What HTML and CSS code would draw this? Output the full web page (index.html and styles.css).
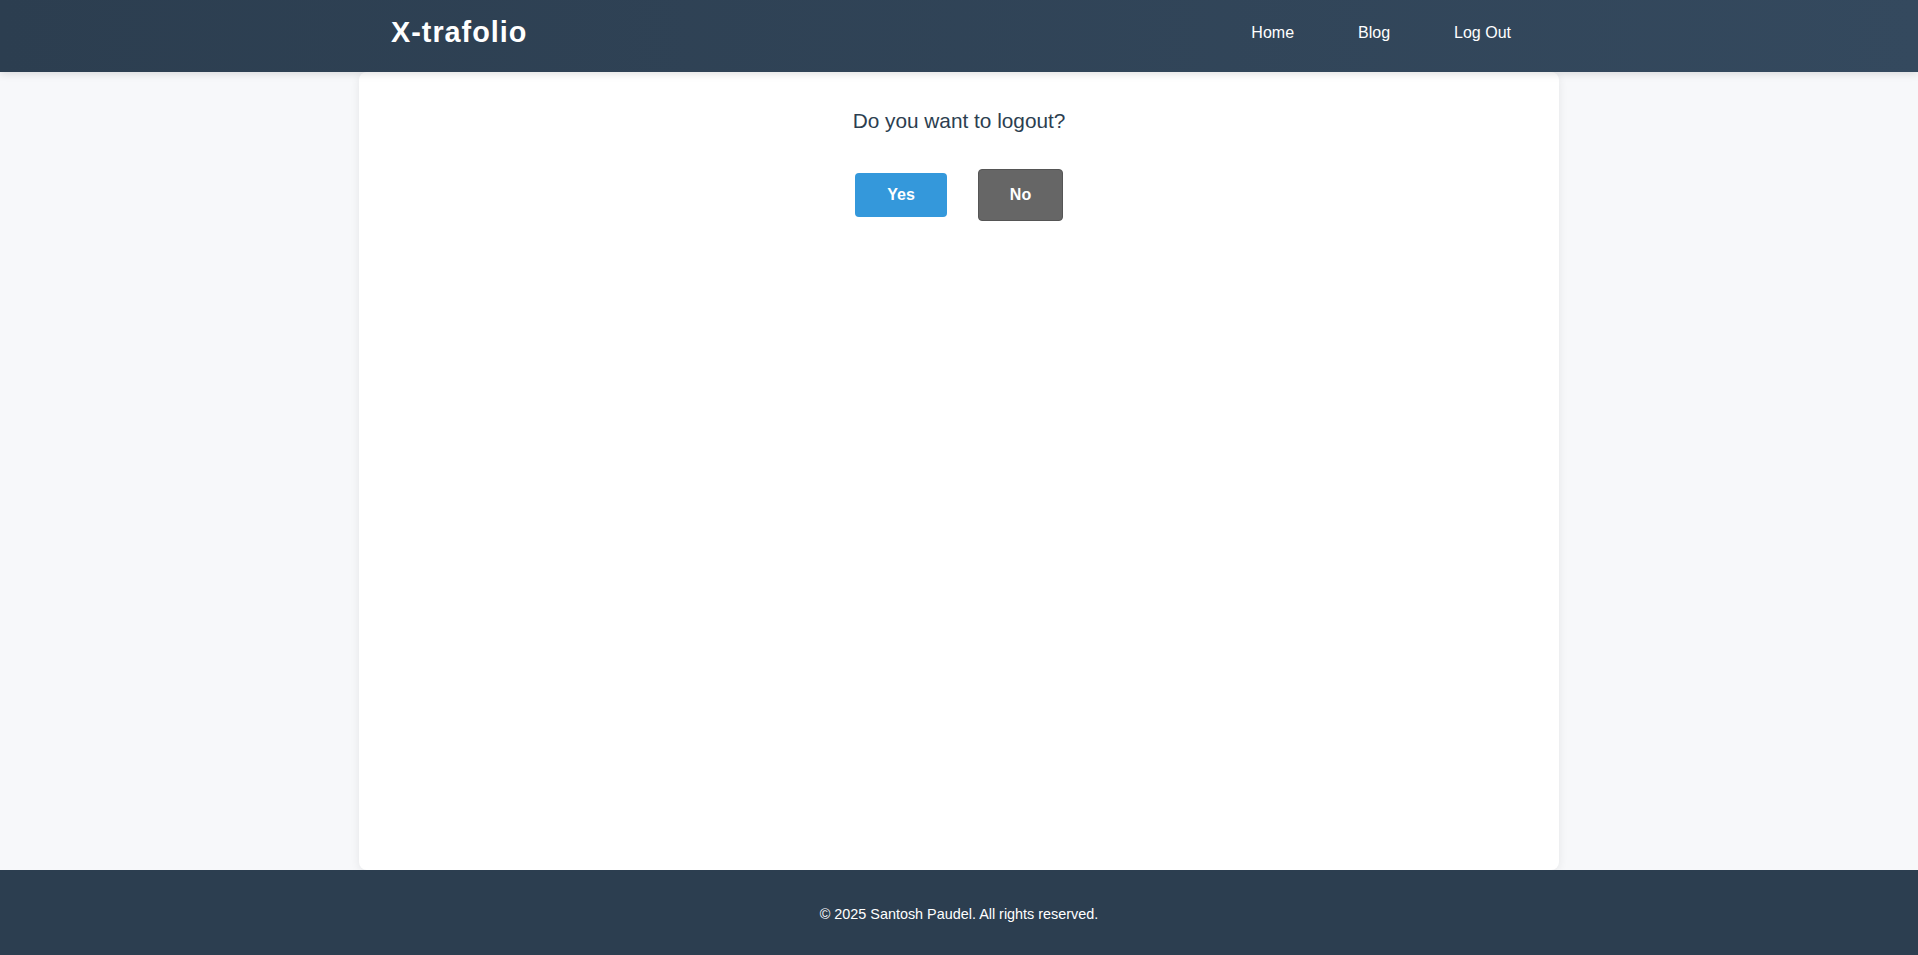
FILE: index.html
```html
<!DOCTYPE html>
<html lang="en">
<head>
<meta charset="utf-8">
<title>X-trafolio</title>
<link rel="stylesheet" href="styles.css">
</head>
<body>
<header class="site-header">
  <div class="container header-inner">
    <div class="logo">X-trafolio</div>
    <nav class="nav">
      <a href="#" class="nav-link">Home</a>
      <a href="#" class="nav-link">Blog</a>
      <a href="#" class="nav-link">Log Out</a>
    </nav>
  </div>
</header>
<main class="card">
  <p class="question">Do you want to logout?</p>
  <div class="actions">
    <button class="btn btn-yes">Yes</button>
    <button class="btn btn-no">No</button>
  </div>
</main>
<footer class="site-footer">
  <p>© 2025 Santosh Paudel. All rights reserved.</p>
</footer>
</body>
</html>
```

FILE: styles.css
```css
* { box-sizing: border-box; }
html, body { height: 100%; }
body {
  margin: 0;
  font-family: "Liberation Sans", Arial, sans-serif;
  background: #f7f8fa;
  color: #2c3e50;
  display: flex;
  flex-direction: column;
}
.site-header {
  background: linear-gradient(90deg, #2c3e50, #34495e);
  height: 72px;
  box-shadow: 0 2px 8px rgba(0,0,0,0.12);
  position: relative;
  z-index: 2;
}
.container {
  width: 1200px;
  margin: 0 auto;
  padding: 0 32px;
}
.header-inner {
  height: 100%;
  display: flex;
  align-items: center;
  justify-content: space-between;
}
.logo {
  color: #fff;
  font-size: 28.8px;
  font-weight: bold;
  letter-spacing: 1px;
  margin-top: -8px;
}
.nav {
  display: flex;
  gap: 32px;
  margin-top: -7px;
}
.nav-link {
  color: #fff;
  text-decoration: none;
  font-size: 16px;
  padding: 8px 16px;
}
.card {
  flex: 1;
  width: 1200px;
  margin: 0 auto;
  background: #fff;
  border-radius: 8px;
  box-shadow: 0 2px 10px rgba(0,0,0,0.08);
  padding: 33px 32px 32px;
  display: flex;
  flex-direction: column;
  align-items: center;
}
.question {
  margin: 0;
  font-size: 20.8px;
  line-height: 32px;
  color: #2c3e50;
}
.actions {
  margin-top: 32px;
  display: flex;
  align-items: center;
  gap: 31px;
}
.btn {
  font-family: "Liberation Sans", Arial, sans-serif;
  font-weight: bold;
  font-size: 16px;
  color: #fff;
  border-radius: 4px;
  cursor: pointer;
}
.btn-yes {
  width: 92px;
  height: 44px;
  border: none;
  background: #3498db;
}
.btn-no {
  width: 85px;
  height: 52px;
  border: 1px solid #555;
  background: #666;
}
.site-footer {
  height: 85px;
  padding-top: 2px;
  background: #2c3e50;
  color: #fff;
  display: flex;
  align-items: center;
  justify-content: center;
  font-size: 14.4px;
}
.site-footer p { margin: 0; }
```
